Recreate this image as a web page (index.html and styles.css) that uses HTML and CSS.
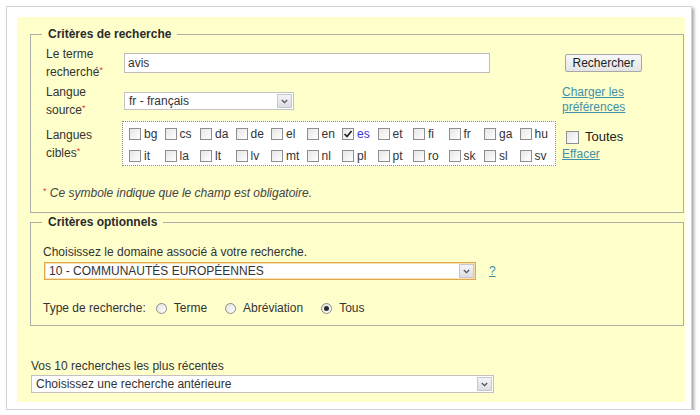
FILE: index.html
```html
<!DOCTYPE html>
<html lang="fr">
<head>
  <meta charset="UTF-8">
  <title>Recherche terminologique</title>
  <link rel="stylesheet" href="styles.css">
</head>
<body>
  <div class="card">
    <div class="panel">

      <fieldset class="group group-main">
        <legend>Critères de recherche</legend>

        <div class="form-grid">
          <div class="field-label">Le terme<br>recherché<span class="req">*</span></div>
          <div class="field">
            <input class="text-input" type="text" value="avis">
          </div>
          <div class="side">
            <button class="btn">Rechercher</button>
          </div>

          <div class="field-label">Langue<br>source<span class="req">*</span></div>
          <div class="field">
            <div class="select select-source">
              <span class="select-text">fr - français</span>
              <span class="select-arrow"><svg width="7" height="5" viewBox="0 0 7 5"><path d="M0.8 1 L3.5 3.6 L6.2 1" fill="none" stroke="#555" stroke-width="1.3"/></svg></span>
            </div>
          </div>
          <div class="side side-top">
            <a class="link" href="#">Charger les<br>préférences</a>
          </div>

          <div class="field-label">Langues<br>cibles<span class="req">*</span></div>
          <div class="field">
            <div class="lang-box">
              <label class="lang"><span class="cb"></span>bg</label>
              <label class="lang"><span class="cb"></span>cs</label>
              <label class="lang"><span class="cb"></span>da</label>
              <label class="lang"><span class="cb"></span>de</label>
              <label class="lang"><span class="cb"></span>el</label>
              <label class="lang"><span class="cb"></span>en</label>
              <label class="lang lang-on"><span class="cb"><svg width="10" height="10" viewBox="0 0 10 10"><path d="M1.6 5 L4 7.5 L8.6 2" fill="none" stroke="#222" stroke-width="1.7"/></svg></span>es</label>
              <label class="lang"><span class="cb"></span>et</label>
              <label class="lang"><span class="cb"></span>fi</label>
              <label class="lang"><span class="cb"></span>fr</label>
              <label class="lang"><span class="cb"></span>ga</label>
              <label class="lang"><span class="cb"></span>hu</label>
              <label class="lang"><span class="cb"></span>it</label>
              <label class="lang"><span class="cb"></span>la</label>
              <label class="lang"><span class="cb"></span>lt</label>
              <label class="lang"><span class="cb"></span>lv</label>
              <label class="lang"><span class="cb"></span>mt</label>
              <label class="lang"><span class="cb"></span>nl</label>
              <label class="lang"><span class="cb"></span>pl</label>
              <label class="lang"><span class="cb"></span>pt</label>
              <label class="lang"><span class="cb"></span>ro</label>
              <label class="lang"><span class="cb"></span>sk</label>
              <label class="lang"><span class="cb"></span>sl</label>
              <label class="lang"><span class="cb"></span>sv</label>
            </div>
          </div>
          <div class="side side-top">
            <label class="toutes"><span class="cb cb-big"></span>Toutes</label>
            <a class="link" href="#">Effacer</a>
          </div>
        </div>

        <p class="note"><span class="req">*</span> Ce symbole indique que le champ est obligatoire.</p>
      </fieldset>

      <fieldset class="group group-opt">
        <legend>Critères optionnels</legend>

        <div class="line">Choisissez le domaine associé à votre recherche.</div>
        <div class="domain-row">
          <div class="select select-domain">
            <span class="select-text">10 - COMMUNAUTÉS EUROPÉENNES</span>
            <span class="select-arrow"><svg width="7" height="5" viewBox="0 0 7 5"><path d="M0.8 1 L3.5 3.6 L6.2 1" fill="none" stroke="#555" stroke-width="1.3"/></svg></span>
          </div>
          <a class="link help" href="#">?</a>
        </div>

        <div class="type-row">
          <span class="type-label">Type de recherche:</span>
          <label class="radio-item"><span class="radio"></span>Terme</label>
          <label class="radio-item"><span class="radio"></span>Abréviation</label>
          <label class="radio-item"><span class="radio radio-on"></span>Tous</label>
        </div>
      </fieldset>

      <div class="recent">
        <div class="line">Vos 10 recherches les plus récentes</div>
        <div class="select select-recent">
          <span class="select-text">Choisissez une recherche antérieure</span>
          <span class="select-arrow"><svg width="7" height="5" viewBox="0 0 7 5"><path d="M0.8 1 L3.5 3.6 L6.2 1" fill="none" stroke="#555" stroke-width="1.3"/></svg></span>
        </div>
      </div>

    </div>
  </div>
</body>
</html>
```

FILE: styles.css
```css
body {
  margin: 0;
  background: #ffffff;
  font-family: "Liberation Sans", Arial, sans-serif;
  font-size: 12px;
  color: #333333;
}

.card {
  width: 686px;
  height: 404px;
  margin: 6px 0 0 6px;
  box-sizing: border-box;
  padding: 10px 6px 7px 10px;
  background: #ffffff;
  border: 1px solid #d4d4d4;
  box-shadow: 2px 2px 3px rgba(0, 0, 0, 0.35);
}

.panel {
  height: 100%;
  background: #ffffcc;
  overflow: hidden;
}

.group {
  margin: 0 1px 0 13px;
  border: 1px solid #aeaea6;
  min-width: 0;
}

.group legend {
  font-weight: bold;
  font-size: 12px;
  line-height: 16px;
  color: #2a2a2a;
  padding: 0 6px;
}

.group-main {
  margin-top: 9px;
  padding: 3px 0 11px 15px;
}

.group-main legend {
  margin-left: -4px;
}

.form-grid {
  display: grid;
  grid-template-columns: 76px 440px 1fr;
  row-gap: 2px;
  align-items: center;
}

.form-grid > .field-label:nth-of-type(3) {
  margin-top: 1px;
}

.field-label {
  line-height: 18px;
}

.req {
  color: #e8342a;
  font-size: 9px;
  vertical-align: top;
  position: relative;
  top: -2px;
}

.text-input {
  display: block;
  box-sizing: border-box;
  width: 366px;
  height: 20px;
  margin-left: 2px;
  padding: 0 3px;
  border: 1px solid #bdbdbd;
  background: #ffffff;
  font-family: inherit;
  font-size: 12px;
  color: #333333;
}

.btn {
  margin-left: 3px;
  height: 18px;
  width: 77px;
  padding: 0;
  border: 1px solid #a8a8a8;
  border-radius: 2px;
  background: linear-gradient(#f8f8f8, #e4e4e4);
  font-family: inherit;
  font-size: 12px;
  color: #222222;
}

.side-top {
  align-self: start;
}

.link {
  display: block;
  color: #3f90a8;
  line-height: 15px;
  text-decoration: underline;
}

.form-grid .side-top .link {
  margin-top: 2px;
}

.select {
  display: flex;
  align-items: center;
  box-sizing: border-box;
  height: 18px;
  background: #ffffff;
  border: 1px solid #c2c2c2;
}

.select-text {
  flex: 1;
  padding-left: 4px;
  white-space: nowrap;
  overflow: hidden;
}

.select-arrow {
  display: flex;
  align-items: center;
  justify-content: center;
  width: 15px;
  height: 14px;
  margin-right: 1px;
  border: 1px solid #c4c8d4;
  background: linear-gradient(#f4f4f8, #dcdde4);
  box-sizing: border-box;
}

.select-source {
  width: 170px;
  margin-left: 2px;
}

.lang-box {
  box-sizing: border-box;
  width: 434px;
  height: 45px;
  padding: 3px 0 0 6px;
  border: 1px dotted #8a8a8a;
  background: #ffffff;
  display: grid;
  grid-template-columns: repeat(12, 35.5px);
  row-gap: 4px;
}

.lang {
  display: flex;
  align-items: center;
  line-height: 16px;
  white-space: nowrap;
}

.lang-on {
  color: #3535d8;
}

.cb {
  display: inline-flex;
  align-items: center;
  justify-content: center;
  box-sizing: border-box;
  width: 12px;
  height: 12px;
  margin-right: 3px;
  border: 1px solid #8e8e8e;
  background: linear-gradient(135deg, #e6e6e6, #ffffff);
}

.cb-big {
  width: 13px;
  height: 13px;
  margin-right: 6px;
}

.toutes {
  display: flex;
  align-items: center;
  margin: 8px 0 0 4px;
  line-height: 16px;
  font-size: 13px;
  color: #222222;
}

.note {
  margin: 19px 0 0 -3px;
  line-height: 16px;
  font-style: italic;
  color: #444444;
}

.note .req {
  font-style: normal;
}

.group-opt {
  margin-top: 1px;
  padding: 14px 0 9px 12px;
}

.group-opt legend {
  margin-left: -1px;
}

.line {
  line-height: 16px;
}

.domain-row {
  display: flex;
  align-items: center;
  margin-top: 2px;
}

.select-domain {
  width: 432px;
  margin-left: 1px;
  border-color: #e0a84c;
  box-shadow: inset 0 0 0 1px #f7e2b0;
}

.help {
  margin-left: 13px;
}

.type-row {
  display: flex;
  align-items: center;
  margin-top: 20px;
  line-height: 16px;
}

.type-label {
  margin-right: 10px;
}

.radio-item {
  display: flex;
  align-items: center;
  margin-right: 18px;
}

.radio {
  display: inline-flex;
  align-items: center;
  justify-content: center;
  box-sizing: border-box;
  width: 11px;
  height: 11px;
  margin-right: 7px;
  border: 1px solid #8a8a8a;
  border-radius: 50%;
  background: linear-gradient(135deg, #e2e2e2, #ffffff);
}

.radio-on::after {
  content: "";
  width: 5px;
  height: 5px;
  border-radius: 50%;
  background: #2a2a2a;
}

.recent {
  margin: 32px 0 0 14px;
}

.select-recent {
  width: 463px;
  margin-top: 1px;
}
```
